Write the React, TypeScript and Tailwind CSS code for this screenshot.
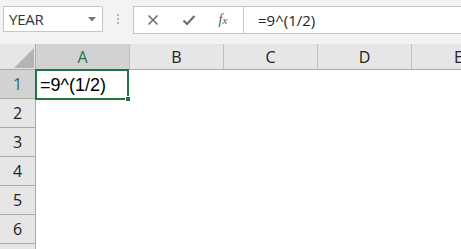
import React from "react";

const cols = ["A", "B", "C", "D", "E"];
const rows = [1, 2, 3, 4, 5, 6, 7];

export default function App() {
  return (
    <div className="w-[461px] h-[249px] overflow-hidden bg-white" style={{ fontFamily: '"Open Sans", "Noto Sans", sans-serif' }}>
      {/* toolbar */}
      <div className="h-[44px] bg-[#f3f3f3] flex items-start pt-[6px] pl-[3px]">
        <div className="w-[100px] shrink-0 h-[26px] bg-white border border-[#c6c6c6] flex items-center justify-between pl-[5px] pr-[6px]">
          <span className="text-[15px] text-[#333] leading-none tracking-[-0.2px]">YEAR</span>
          <svg width="8" height="5" viewBox="0 0 8 5"><path d="M0 0h8L4 4.5z" fill="#777" /></svg>
        </div>
        <div className="w-[30px] shrink-0 h-[26px] flex flex-col items-center justify-center gap-[2px]">
          <span className="w-[2px] h-[2px] bg-[#b5b5b5]" />
          <span className="w-[2px] h-[2px] bg-[#b5b5b5]" />
          <span className="w-[2px] h-[2px] bg-[#b5b5b5]" />
        </div>
        <div className="flex-1 h-[28px] bg-white border border-[#c6c6c6] border-r-0 flex items-center">
          <div className="w-[110px] shrink-0 h-full flex items-center border-r border-[#c6c6c6]">
            <div className="w-[38px] flex justify-center">
              <svg width="12" height="12" viewBox="0 0 12 12"><path d="M1.5 1.5l9 9M10.5 1.5l-9 9" stroke="#6e6e6e" strokeWidth="1.6" /></svg>
            </div>
            <div className="w-[34px] flex justify-center">
              <svg width="14" height="12" viewBox="0 0 14 12"><path d="M1.5 6.5l3.5 3.5 7.5-8" stroke="#6e6e6e" strokeWidth="2.2" fill="none" /></svg>
            </div>
            <div className="w-[34px] flex justify-center">
              <span className="text-[14px] italic text-[#555] leading-none" style={{ fontFamily: '"Liberation Serif", serif' }}>f<span className="text-[11px]">x</span></span>
            </div>
          </div>
          <span className="pl-[14px] text-[15px] text-[#222] leading-none">=9^(1/2)</span>
        </div>
      </div>
      {/* header row */}
      <div className="flex h-[26px] border-b border-[#ababab]">
        <div className="w-[36px] shrink-0 bg-[#e6e6e6] border-r border-[#ababab] relative">
          <svg className="absolute left-[14px] top-[4px]" width="20" height="20" viewBox="0 0 20 20"><path d="M20 0V20H0z" fill="#b4b4b4" /></svg>
        </div>
        {cols.map((c, i) => (
          <div
            key={c}
            className={`w-[94px] shrink-0 flex items-center justify-center border-r border-[#c0c0c0] text-[16px] ${i === 0 ? "bg-[#d2d2d2] text-[#217346]" : "bg-[#e6e6e6] text-[#222]"}`}
          >
            {c}
          </div>
        ))}
      </div>
      {/* rows */}
      {rows.map((r) => (
        <div key={r} className="flex h-[29px]">
          <div className={`w-[36px] shrink-0 flex items-center justify-center border-r border-b border-[#ababab] text-[16px] ${r === 1 ? "bg-[#d2d2d2] text-[#217346]" : "bg-[#e6e6e6] text-[#222]"}`}>
            {r < 7 ? r : null}
          </div>
          {r === 1 ? (
            <div className="w-[94px] shrink-0 relative border-2 border-[#217346] -ml-[1px] -mt-[1px] h-[31px] flex items-center pl-[3px]">
              <span className="text-[18px] text-black leading-none" style={{ fontFamily: '"Liberation Sans", sans-serif' }}>=9^(1/2)</span>
              <span className="absolute -right-[4px] -bottom-[4px] w-[6px] h-[6px] bg-[#217346] border border-white" />
            </div>
          ) : null}
        </div>
      ))}
    </div>
  );
}
